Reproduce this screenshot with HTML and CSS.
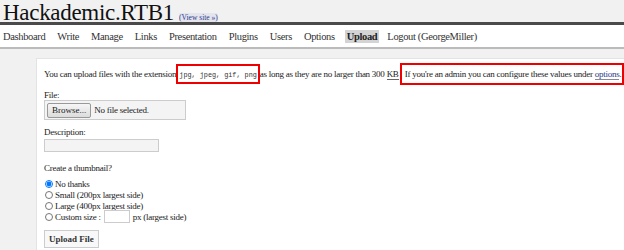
FILE: index.html
```html
<!DOCTYPE html>
<html lang="en">
<head>
  <meta charset="UTF-8">
  <title>Upload &lsaquo; Hackademic.RTB1</title>
  <link rel="stylesheet" href="styles.css">
</head>
<body>
  <header class="head">
    <h1>Hackademic.RTB1</h1>
    <a class="view-site" href="#">(View site &raquo;)</a>
  </header>

  <nav class="adminmenu">
    <a href="#">Dashboard</a>
    <a href="#">Write</a>
    <a href="#">Manage</a>
    <a href="#">Links</a>
    <a href="#">Presentation</a>
    <a href="#">Plugins</a>
    <a href="#">Users</a>
    <a href="#">Options</a>
    <a href="#" class="current">Upload</a>
    <a href="#">Logout (GeorgeMiller)</a>
  </nav>

  <main class="wrap">
    <p class="note">You can upload files with the extension<span class="mark ext"><code>jpg, jpeg, gif, png</code></span>as long as they are no larger than 300 <abbr title="Kilobytes">KB</abbr><span class="mark admin">If you're an admin you can configure these values under <a href="#">options</a>.</span></p>

    <form class="upload-form">
      <label class="field-label">File:</label>
      <div class="file-box">
        <button type="button" class="browse">Browse...</button>
        <span>No file selected.</span>
      </div>

      <label class="field-label">Description:</label>
      <input type="text" class="desc">

      <p class="thumb-title">Create a thumbnail?</p>
      <div class="radios">
        <label><input type="radio" name="thumb" checked> No thanks</label>
        <label><input type="radio" name="thumb"> Small (200px largest side)</label>
        <label><input type="radio" name="thumb"> Large (400px largest side)</label>
        <label><input type="radio" name="thumb"> Custom size : <input type="text" class="size"> px (largest side)</label>
      </div>

      <button type="button" class="submit">Upload File</button>
    </form>
  </main>
</body>
</html>
```

FILE: styles.css
```css
:root {
  --bg: #f1f1f1;
  --text: #222;
  --link: #2a3a8c;
}

body {
  margin: 0;
  background: var(--bg);
  color: var(--text);
  font-family: 'Liberation Serif', serif;
  font-size: 9px;
  letter-spacing: -0.25px;
  overflow: hidden;
}

.head {
  display: flex;
  align-items: baseline;
  gap: 5px;
  padding: 1px 3px 0;
  height: 21px;
}

.head h1 {
  margin: 0;
  font-weight: normal;
  font-size: 23px;
  line-height: 24px;
  letter-spacing: -0.3px;
  color: #111;
}

.view-site {
  font-size: 7.5px;
  letter-spacing: 0;
  color: var(--link);
  text-decoration: none;
  background: #e4e4ec;
  border-radius: 2px;
}

.adminmenu {
  display: flex;
  gap: 12px;
  align-items: center;
  height: 22px;
  padding: 0 3px;
  background: #fff;
  border-top: 3px solid #4a4a4a;
  border-bottom: 2px solid #bbb;
  font-size: 10.5px;
  letter-spacing: -0.35px;
}

.adminmenu a {
  color: #333;
  text-decoration: none;
}

.adminmenu a.current {
  background: #d4d4d4;
  font-weight: bold;
  color: #222;
  padding: 1px 2px;
  margin: 0 -4px 0 -2px;
}

.wrap {
  margin: 9px 0 0 36px;
  background: #fff;
  border: 1px solid #e3e3e3;
  border-right: none;
  padding: 5px 7px 10px;
}

.note {
  margin: 0 0 5px;
  line-height: 20px;
  white-space: nowrap;
}

.mark {
  border: 2px solid #e00;
  padding: 3px 1px;
}

.ext code {
  font-family: 'Liberation Mono', monospace;
  font-size: 6.8px;
  letter-spacing: 0;
  color: #333;
}

abbr {
  text-decoration: none;
  border-bottom: 1px solid #666;
  margin-right: 1px;
}

.admin {
  padding: 4px 1px 4px 3px;
}

.admin a {
  color: var(--link);
  text-decoration: none;
  border-bottom: 1px solid #889;
}

.upload-form {
  display: flex;
  flex-direction: column;
  align-items: flex-start;
}

.field-label {
  line-height: 10px;
}

.file-box {
  display: flex;
  align-items: center;
  gap: 3px;
  box-sizing: border-box;
  width: 142px;
  height: 20px;
  padding: 0 2px;
  border: 1px solid #ccc;
  background: #f4f4f4;
  margin-bottom: 7px;
}

.browse {
  font: inherit;
  font-size: 9px;
  padding: 1px 4px;
  height: 15px;
  background: linear-gradient(#f6f6f6, #dcdcdc);
  border: 1px solid #999;
  border-radius: 2px;
  color: #222;
}

.desc {
  box-sizing: border-box;
  width: 115px;
  height: 13px;
  border: 1px solid #ccc;
  background: #f4f4f4;
  margin: 2px 0 11px;
}

.thumb-title {
  margin: 0 0 5px;
  line-height: 10px;
}

.radios {
  display: flex;
  flex-direction: column;
  margin-bottom: 9px;
}

.radios label {
  display: flex;
  align-items: center;
  height: 11px;
}

.radios input[type="radio"] {
  width: 8px;
  height: 8px;
  margin: 0 2px 0 1px;
}

.size {
  box-sizing: border-box;
  width: 26px;
  height: 13px;
  border: 1px solid #ccc;
  margin: 0 3px;
  padding: 0;
}

.submit {
  font: inherit;
  font-weight: bold;
  font-size: 9px;
  height: 18px;
  padding: 0 4px;
  margin-top: -1px;
  background: #f8f8f8;
  border: 1px solid #ccc;
  color: #333;
}
```
